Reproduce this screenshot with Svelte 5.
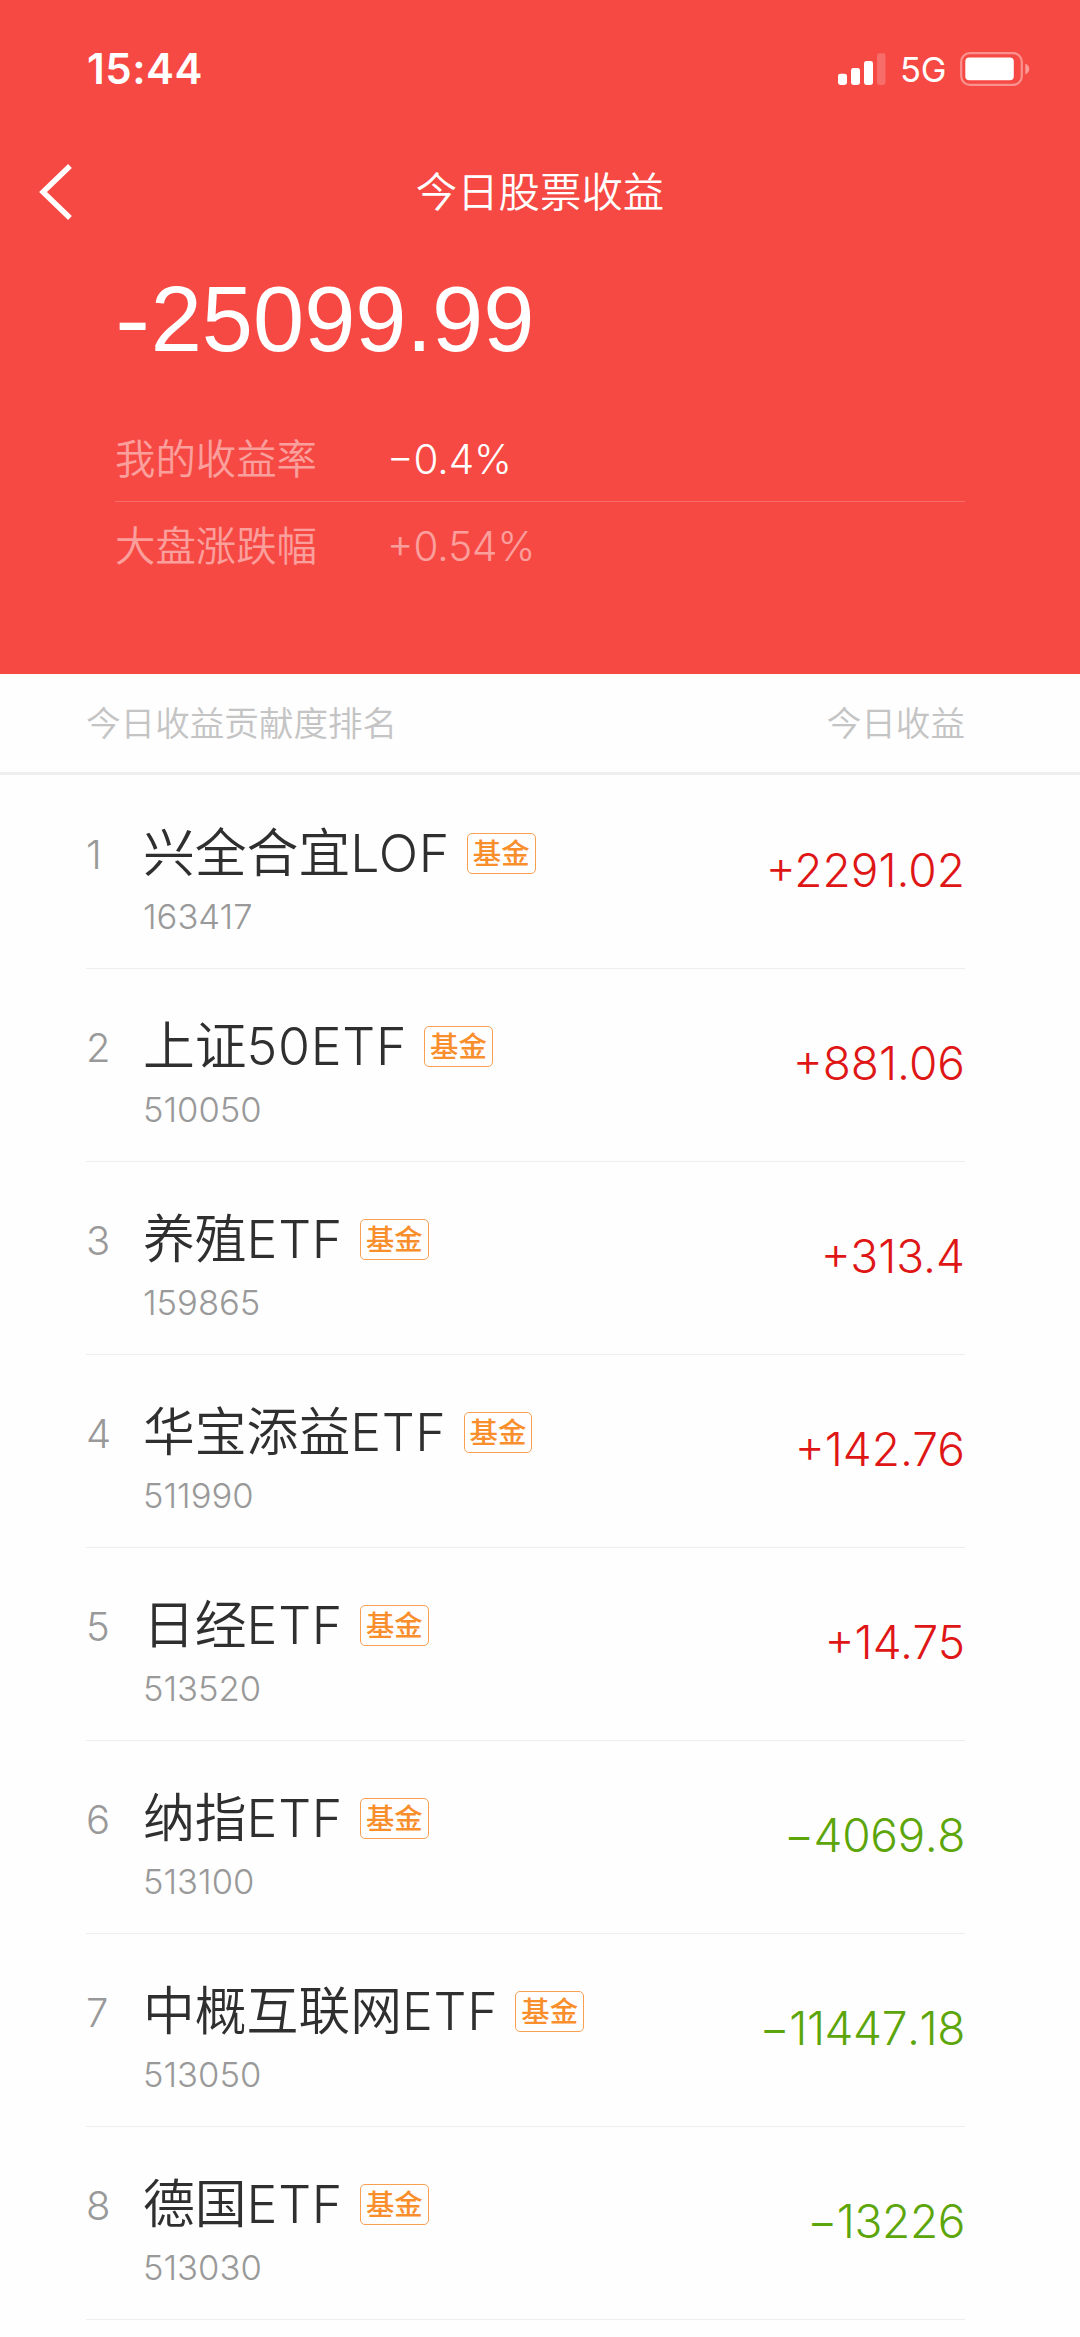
<script lang="ts">
  type Holding = {
    name: string;
    suffix: string;
    code: string;
    profit: string;
  };

  const summary = [
    { label: "我的收益率", value: "−0.4%", dim: false },
    { label: "大盘涨跌幅", value: "+0.54%", dim: true },
  ];

  const holdings: Holding[] = [
    { name: "兴全合宜", suffix: "LOF", code: "163417", profit: "+2291.02" },
    { name: "上证", suffix: "50ETF", code: "510050", profit: "+881.06" },
    { name: "养殖", suffix: "ETF", code: "159865", profit: "+313.4" },
    { name: "华宝添益", suffix: "ETF", code: "511990", profit: "+142.76" },
    { name: "日经", suffix: "ETF", code: "513520", profit: "+14.75" },
    { name: "纳指", suffix: "ETF", code: "513100", profit: "−4069.8" },
    { name: "中概互联网", suffix: "ETF", code: "513050", profit: "−11447.18" },
    { name: "德国", suffix: "ETF", code: "513030", profit: "−13226" },
  ];
</script>

<div class="page">
  <header class="hero">
    <div class="status">
      <span class="time">15:44</span>
      <div class="status-icons">
        <svg class="signal" width="48" height="32" viewBox="0 0 48 32" fill="#fff">
          <rect x="0" y="20.7" width="9" height="11.3" rx="2.4" />
          <rect x="13" y="15" width="9" height="17" rx="2.4" />
          <rect x="26" y="8" width="9" height="24" rx="2.4" />
          <rect x="39" y="0.3" width="8.5" height="31.7" rx="2.4" opacity="0.2" />
        </svg>
        <span class="network">5G</span>
        <svg class="battery" width="70" height="34" viewBox="0 0 70 34">
          <rect x="1.2" y="1.2" width="60.6" height="31.6" rx="8.5" fill="none" stroke="#fff" stroke-width="2.2" opacity="0.4" />
          <rect x="5.3" y="5.5" width="48.5" height="22.8" rx="4" fill="#fff" />
          <path d="M65.3 11.5c2.4 1 4 3 4 5.500s-1.600 4.500-4 5.500z" fill="#fff" opacity="0.45" />
        </svg>
      </div>
    </div>

    <nav class="nav">
      <svg class="back" width="34" height="56" viewBox="0 0 34 56" fill="none" stroke="#fff" stroke-width="5.400">
        <path d="M31 2L4 28L31 54" />
      </svg>
      <h1>今日股票收益</h1>
    </nav>

    <div class="total"><span class="sign">-</span>25099.99</div>

    <div class="summary">
      {#each summary as item}
        <div class="metric">
          <span class="metric-label">{item.label}</span>
          <span class:dim={item.dim}>{item.value}</span>
        </div>
      {/each}
    </div>
  </header>

  <div class="list-head">
    <span>今日收益贡献度排名</span>
    <span>今日收益</span>
  </div>

  <div class="list">
    {#each holdings as item, i}
      <div class="row">
        <span class="rank">{i + 1}</span>
        <div class="info">
          <div class="name-line">
            <span class="name">{item.name}<span class="suffix">{item.suffix}</span></span>
            <span class="tag">基金</span>
          </div>
          <span class="code">{item.code}</span>
        </div>
        <span class="profit" class:down={item.profit.startsWith("−")}>{item.profit}</span>
      </div>
    {/each}
  </div>
</div>

<style>
  :global(body) {
    background: #fefefe;
  }

  .page {
    width: 1080px;
    height: 2337px;
    overflow: hidden;
    background: #fefefe;
    font-family: Inter, "Noto Sans CJK SC", sans-serif;
    font-weight: 350;
    white-space: nowrap;
  }

  .hero {
    box-sizing: border-box;
    height: 674px;
    background: #f64944;
    color: #fff;
  }

  .status {
    display: flex;
    align-items: center;
    justify-content: space-between;
    height: 137px;
    padding: 0 50px 0 87px;
  }

  .time {
    font-size: 42px;
    font-weight: 600;
    letter-spacing: 0.5px;
  }

  .status-icons {
    display: flex;
    align-items: center;
  }

  .network {
    width: 46px;
    margin: 3px 14px 0 14px;
    font-size: 34.5px;
    line-height: 34px;
    font-weight: 400;
    letter-spacing: -0.3px;
  }

  .nav {
    display: grid;
    grid-template-columns: 80px 1fr 80px;
    align-items: center;
    height: 109px;
  }

  .back {
    margin-left: 39px;
  }

  h1 {
    margin: 1px 0 0;
    text-align: center;
    font-size: 41.4px;
    font-weight: 350;
    line-height: 60px;
  }

  .total {
    padding: 19px 0 0 115px;
    font-family: "Liberation Sans", Arial, sans-serif;
    font-size: 92px;
    font-weight: 400;
    line-height: 109px;
  }

  .sign {
    display: inline-block;
    margin-right: 5px;
    transform: scaleX(1.15);
    transform-origin: left;
  }

  .summary {
    margin: 43px 115px 0;
  }

  .metric {
    display: flex;
    height: 84px;
    line-height: 86px;
    font-size: 40.4px;
  }

  .metric:first-child {
    border-bottom: 1px solid rgba(255, 255, 255, 0.2);
  }

  .metric:last-child {
    line-height: 90px;
  }

  .metric-label {
    width: 272px;
    opacity: 0.47;
  }

  .dim {
    opacity: 0.47;
  }

  .list-head {
    display: flex;
    justify-content: space-between;
    height: 98px;
    padding: 0 115px 0 86px;
    border-bottom: 3px solid #eee;
    color: #c4c4c4;
    font-size: 34.6px;
    line-height: 99px;
  }

  .list {
    padding: 0 115px 0 86px;
  }

  .row {
    display: flex;
    box-sizing: border-box;
    height: 193px;
    border-bottom: 1px solid #eee;
  }

  .row:first-child {
    padding-top: 1px;
    height: 194px;
  }

  .rank {
    width: 57px;
    padding-top: 53px;
    color: #999;
    font-size: 40px;
    font-weight: 300;
    line-height: 52px;
  }

  .info {
    flex: 1;
    padding-top: 51px;
  }

  .name-line {
    display: flex;
    align-items: center;
    height: 52px;
  }

  .name {
    color: #2f2f2f;
    font-size: 51.8px;
    line-height: 53px;
  }

  .suffix {
    letter-spacing: 0.7px;
  }

  .tag {
    margin-left: 17px;
    padding: 0 5px;
    border: 1.500px solid #f9a050;
    border-radius: 5px;
    color: #f98e2c;
    font-size: 28.4px;
    font-weight: 500;
    line-height: 39px;
  }

  .code {
    display: block;
    margin-top: 20px;
    color: #999;
    font-size: 34.6px;
    font-weight: 300;
    line-height: 34px;
  }

  .profit {
    padding: 64px 0 0;
    color: #df1616;
    font-size: 46px;
    line-height: 61px;
  }

  .profit.down {
    color: #5ca50a;
    font-kerning: none;
    letter-spacing: -0.4px;
  }
</style>
